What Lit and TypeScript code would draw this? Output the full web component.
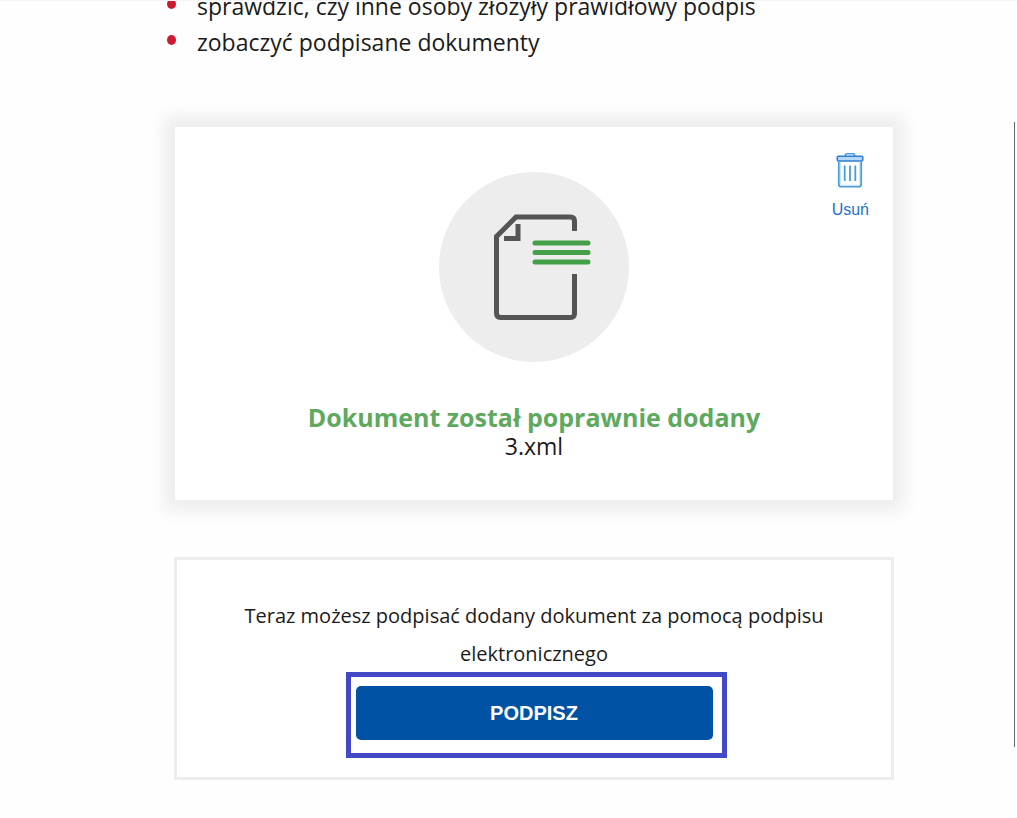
import { LitElement, html, css } from "lit";
import { customElement, property } from "lit/decorators.js";

@customElement("document-card")
class DocumentCard extends LitElement {
  @property() name = "";

  static styles = css`
    :host {
      display: block;
      margin: 0 1px;
      background: #fff;
      box-shadow: 0 0 16px 11px #ededed;
    }
    .card {
      display: grid;
      grid-template-columns: 1fr auto 1fr;
      padding: 24px 24px 39px;
    }
    .picture {
      grid-column: 2;
      display: block;
      width: 190px;
      height: 190px;
      margin-top: 21px;
    }
    .remove {
      grid-column: 3;
      justify-self: end;
      align-self: start;
      display: flex;
      flex-direction: column;
      align-items: center;
      gap: 10px;
      padding: 0;
      border: 0;
      background: none;
      color: #2470c8;
      font: 16px/22px "Liberation Sans", Arial, sans-serif;
      cursor: pointer;
    }
    .bin {
      display: block;
      width: 28px;
      height: 38px;
    }
    .status {
      grid-column: 1 / -1;
      margin-top: 41px;
      text-align: center;
      line-height: 29px;
      color: #1b1b1b;
    }
    .title {
      margin: 0;
      font-size: 25px;
      font-weight: 700;
      color: #5fa95f;
    }
    .file {
      margin: 0;
      font-size: 23px;
    }
  `;

  render() {
    return html`
      <section class="card">
        <svg class="picture" viewBox="0 0 190 190" aria-hidden="true">
          <circle cx="95" cy="95" r="95" fill="#ededed" />
          <g fill="none" stroke="#555" stroke-width="5">
            <path d="M135.500 59V49Q135.500 45 131.500 45H77L57.500 64.500V141Q57.500 145.500 61.500 145.500H131.500Q135.500 145.500 135.500 141.500V102" />
            <path d="M65 66.500H79V52" />
          </g>
          <path d="M96 71H149M96 80.500H149M96 90H149" fill="none" stroke="#43a047" stroke-width="5" stroke-linecap="round" />
        </svg>
        <button class="remove" type="button">
          <svg class="bin" viewBox="0 0 28 38" fill="none" stroke="#4a9ce2" aria-hidden="true">
            <path d="M9.500 5V3.800Q9.500 2.700 10.600 2.700H17.400Q18.500 2.700 18.500 3.800V5" stroke-width="1.600" />
            <rect x="1.300" y="5.300" width="25.400" height="4.700" rx="1" fill="#b5daf7" stroke="#2c7fd0" stroke-width="1.600" />
            <path d="M2.800 11V33.500Q2.800 35.700 5.500 35.700H22.500Q25.200 35.700 25.200 33.500V11" stroke-width="1.800" />
            <path d="M4.500 11V32.500Q4.500 34.200 6 34.200H22Q23.500 34.200 23.500 32.500V11" stroke="#cfe7fa" stroke-width="1" />
            <path d="M8.700 14.500V30M14 14.500V30M19.300 14.500V30" stroke-width="1.800" />
          </svg>
          Usuń
        </button>
        <div class="status">
          <h2 class="title">Dokument został poprawnie dodany</h2>
          <p class="file">${this.name}</p>
        </div>
      </section>
    `;
  }
}

@customElement("sign-panel")
class SignPanel extends LitElement {
  static styles = css`
    :host {
      display: block;
    }
    .panel {
      display: flex;
      flex-direction: column;
      align-items: center;
      padding: 37px 54px 19px 58px;
      border: 3px solid #ededed;
      background: #fff;
    }
    .text {
      margin: 0 4px -1px 0;
      text-align: center;
      font-size: 20px;
      line-height: 38px;
      color: #1b1b1b;
    }
    .frame {
      box-sizing: border-box;
      width: 381px;
      max-width: 100%;
      padding: 9px 9px 13px 5px;
      border: 5px solid #4149c6;
    }
    .sign {
      display: block;
      width: 100%;
      height: 54px;
      padding: 0;
      border: 0;
      border-radius: 5px;
      background: #0052a5;
      color: #fff;
      font: 700 20px/24px "Liberation Sans", Arial, sans-serif;
      cursor: pointer;
    }
  `;

  render() {
    return html`
      <section class="panel">
        <p class="text">Teraz możesz podpisać dodany dokument za pomocą podpisu elektronicznego</p>
        <div class="frame">
          <button class="sign" type="button">PODPISZ</button>
        </div>
      </section>
    `;
  }
}

@customElement("app-root")
class AppRoot extends LitElement {
  static styles = css`
    :host {
      display: block;
      min-height: 100vh;
      background: #fefefe;
      font-family: "Open Sans", "Noto Sans", sans-serif;
      color: #1b1b1b;
    }
    .bar {
      height: 1px;
      background: #f5f5f7;
    }
    .page {
      display: flex;
      overflow: hidden;
    }
    .content {
      flex: 1;
      min-width: 0;
      padding: 0 120px 38px 174px;
    }
    .list {
      margin: -13px 0 67px;
      padding: 0 0 0 23px;
      list-style: none;
      font-size: 23px;
      line-height: 36px;
    }
    .item {
      display: flex;
      align-items: center;
      gap: 21px;
      margin-left: -30px;
    }
    .dot {
      flex: none;
      width: 9px;
      height: 10px;
      margin-bottom: 4px;
      border-radius: 50%;
      background: #cf1a33;
    }
    .added {
      margin-bottom: 57px;
    }
    .edge {
      flex: none;
      width: 1px;
      margin: 121px 2px 71px 0;
      background: #666;
    }
  `;

  private items = [
    "sprawdzić, czy inne osoby złożyły prawidłowy podpis",
    "zobaczyć podpisane dokumenty",
  ];

  render() {
    return html`
      <div class="bar"></div>
      <main class="page">
        <div class="content">
          <ul class="list">
            ${this.items.map((text) => html`<li class="item"><span class="dot"></span>${text}</li>`)}
          </ul>
          <document-card class="added" name="3.xml"></document-card>
          <sign-panel></sign-panel>
        </div>
        <div class="edge"></div>
      </main>
    `;
  }
}
